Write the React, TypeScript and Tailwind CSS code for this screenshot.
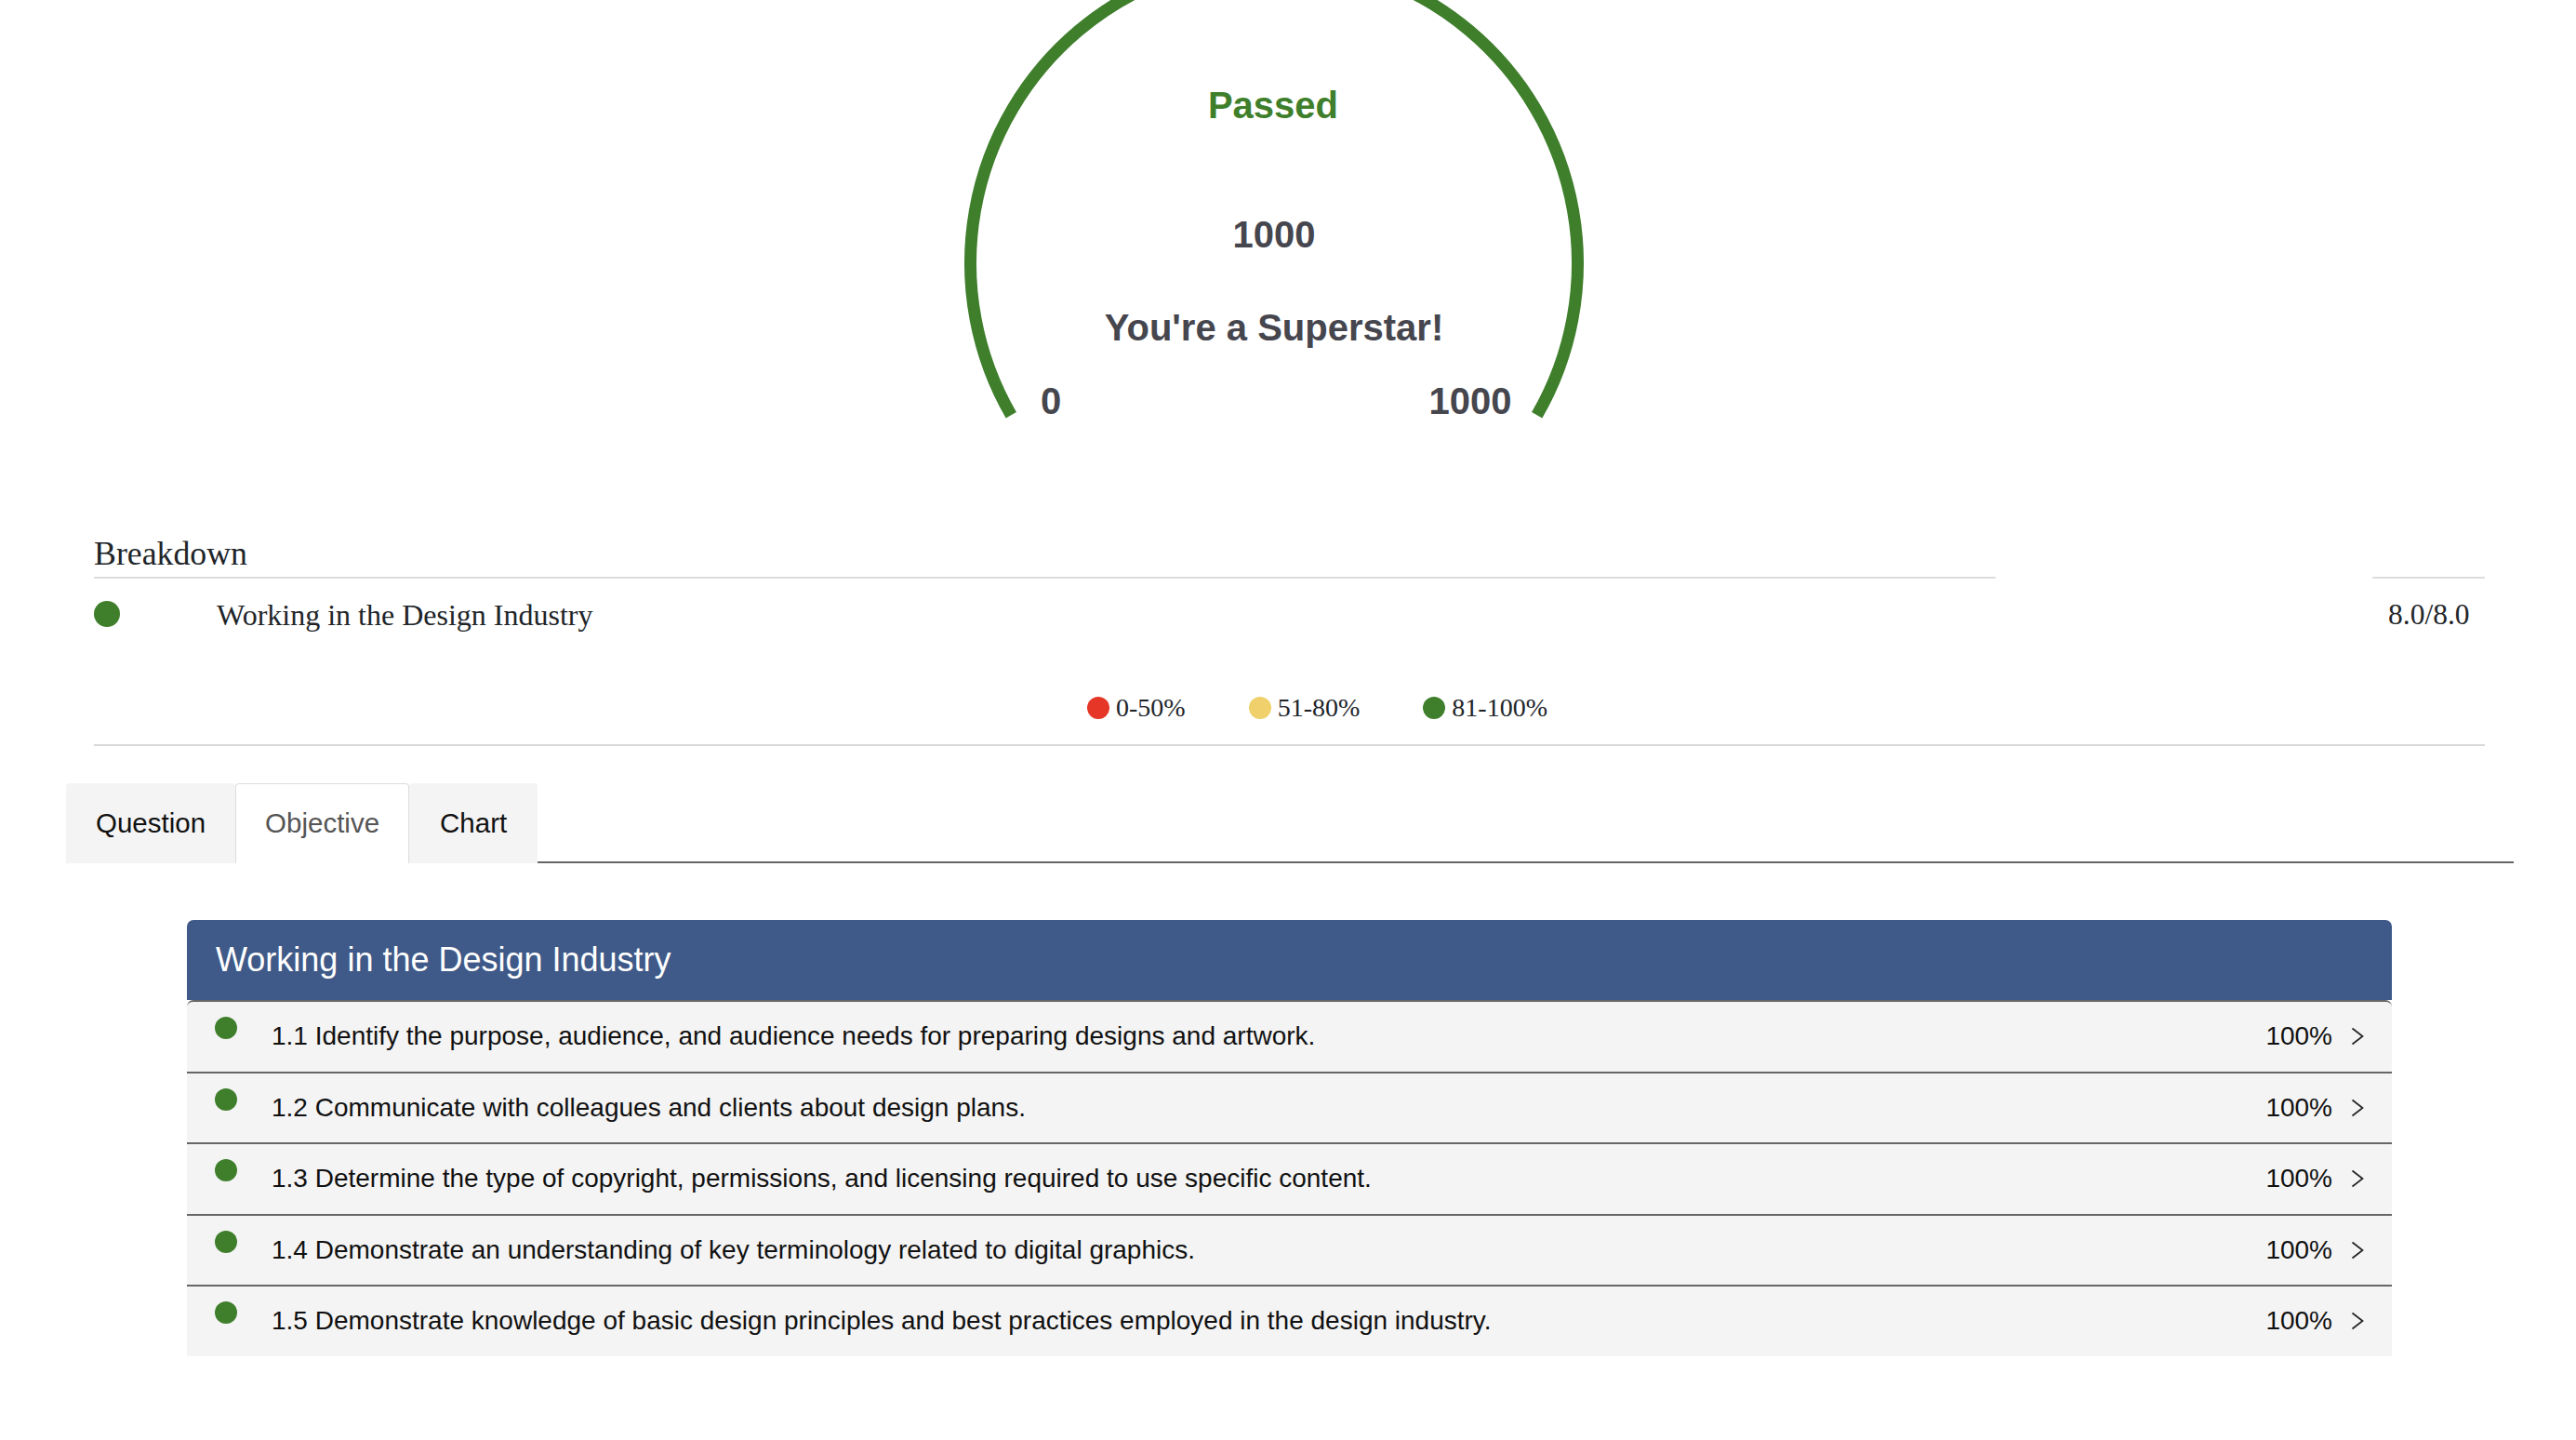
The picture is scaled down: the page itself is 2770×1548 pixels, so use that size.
const objectives = [
  '1.1 Identify the purpose, audience, and audience needs for preparing designs and artwork.',
  '1.2 Communicate with colleagues and clients about design plans.',
  '1.3 Determine the type of copyright, permissions, and licensing required to use specific content.',
  '1.4 Demonstrate an understanding of key terminology related to digital graphics.',
  '1.5 Demonstrate knowledge of basic design principles and best practices employed in the design industry.',
];

const legend = [
  { label: '0-50%', color: 'bg-[#e53628]' },
  { label: '51-80%', color: 'bg-[#efd06a]' },
  { label: '81-100%', color: 'bg-[#3f7f2c]' },
];

function Gauge() {
  // arc runs from 210deg to -30deg, center (370, 283)
  return (
    <div className="flex justify-center pr-[30px]">
      <svg width="740" height="470" viewBox="0 0 740 470" className="block">
        <path
          d="M 87.3 446.25 A 326.5 326.5 0 1 1 652.7 446.25"
          fill="none"
          stroke="#3f7f2c"
          strokeWidth="13"
        />
        <g fontFamily="'Liberation Sans', Arial, sans-serif" fontWeight="700" fontSize="40" textAnchor="middle">
          <text x="369" y="127" fill="#3f7f2c">Passed</text>
          <text x="370" y="266" fill="#46464e">1000</text>
          <text x="370" y="366" fill="#46464e">You're a Superstar!</text>
          <text x="130" y="445" fill="#46464e">0</text>
          <text x="581" y="445" fill="#46464e">1000</text>
        </g>
      </svg>
    </div>
  );
}

function Chevron() {
  return (
    <svg width="14" height="20" viewBox="0 0 14 20" className="block">
      <polyline points="1.5,1.5 12.5,10 1.5,18.5" fill="none" stroke="#222" strokeWidth="1.7" />
    </svg>
  );
}

export default function App() {
  return (
    <div className="min-h-screen w-full bg-white font-['Liberation_Sans',Arial,sans-serif]">
      <Gauge />

      {/* breakdown */}
      <div className="mt-[105px] pl-[101px] pr-[98px] font-['Liberation_Serif','Times_New_Roman',serif] text-[#212529]">
        <div className="flex">
          <div className="flex-1 border-b-2 border-[#dcdcdc] pb-[5px] text-[35.8px] leading-[40px]">Breakdown</div>
          <div className="w-[405px]" />
          <div className="w-[121px] border-b-2 border-[#dcdcdc]" />
        </div>
        <div className="flex items-center pb-[17px] pt-[21px]">
          <div className="-mt-[2px] h-[28px] w-[28px] rounded-full bg-[#3f7f2c]" />
          <div className="ml-[104px] flex-1 text-[32px] leading-[36px]">Working in the Design Industry</div>
          <div className="w-[121px] pl-[17px] text-[31.5px] leading-[36px]">8.0/8.0</div>
        </div>
        <div className="mt-[49px] flex justify-center gap-[68px] border-b-2 border-[#d9d9d9] pb-[23px] pl-[60px]">
          {legend.map((l) => (
            <div key={l.label} className="flex items-center gap-[7px]">
              <div className={`h-[24px] w-[24px] rounded-full ${l.color}`} />
              <span className="text-[28px] leading-[32px]">{l.label}</span>
            </div>
          ))}
        </div>
      </div>

      {/* tabs */}
      <div className="mt-[40px] flex pl-[71px] pr-[67px] text-[29.5px]">
        <div className="flex h-[86px] items-center rounded-t-[4px] bg-[#f4f4f4] px-[32px] text-[#111]">Question</div>
        <div className="flex h-[86px] items-center rounded-t-[4px] border-x border-t border-[#dddddd] bg-white px-[31px] text-[#555]">Objective</div>
        <div className="flex h-[86px] items-center rounded-t-[4px] bg-[#f4f4f4] px-[33px] text-[#111]">Chart</div>
        <div className="h-[86px] flex-1 border-b-2 border-[#666]" />
      </div>

      {/* objectives */}
      <div className="mb-[90px] ml-[201px] mr-[198px] mt-[61px]">
        <div className="flex h-[86px] items-center rounded-t-[7px] bg-[#3f5a88] pl-[31px] text-[36px] text-white">
          Working in the Design Industry
        </div>
        {objectives.map((o, i) => (
          <div
            key={o}
            className={`flex h-[76.5px] items-center border-t-2 border-[#666] bg-[#f4f4f4] px-[30px] ${i === 0 ? 'rounded-t-[7px]' : ''}`}
          >
            <div className="mb-[18px] h-[24px] w-[24px] shrink-0 rounded-full bg-[#3f7f2c]" />
            <div className="ml-[37px] flex-1 text-[28px] leading-[32px] text-[#111]">{o}</div>
            <div className="text-[28px] leading-[32px] text-[#111]">100%</div>
            <div className="ml-[20px]">
              <Chevron />
            </div>
          </div>
        ))}
      </div>
    </div>
  );
}
